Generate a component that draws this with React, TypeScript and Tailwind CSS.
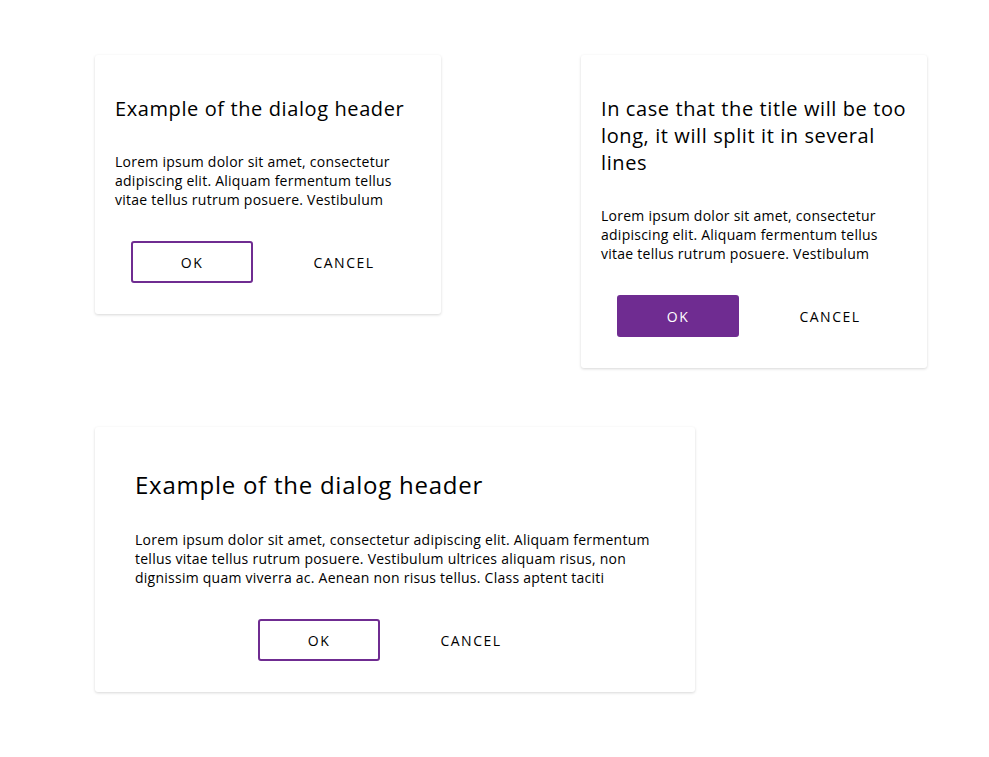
import React from 'react';

const lorem =
  'Lorem ipsum dolor sit amet, consectetur adipiscing elit. Aliquam fermentum tellus vitae tellus rutrum posuere. Vestibulum';
const loremLong =
  'Lorem ipsum dolor sit amet, consectetur adipiscing elit. Aliquam fermentum tellus vitae tellus rutrum posuere. Vestibulum ultrices aliquam risus, non dignissim quam viverra ac. Aenean non risus tellus. Class aptent taciti';

function Dialog({
  title,
  body,
  filled,
  large,
}: {
  title: string;
  body: string;
  filled?: boolean;
  large?: boolean;
}) {
  return (
    <div
      className={
        'bg-white rounded-[3px] shadow-[0_1px_3px_rgba(0,0,0,0.16)] ' +
        (large ? 'w-[600px] px-10 pt-[42px] pb-[31px]' : 'w-[346px] px-5 pt-10 pb-[31px]')
      }
    >
      <h2
        className={
          'text-black ' +
          (large
            ? 'text-[24px] leading-[32px] tracking-[0.75px]'
            : 'text-[20px] leading-[27px] tracking-[0.6px]')
        }
      >
        {title}
      </h2>
      <p
        className={
          'text-[14px] leading-[19px] text-black tracking-[0.25px] ' +
          (large ? 'mt-[29px]' : 'mt-[30px]')
        }
      >
        {body}
      </p>
      <div className="flex justify-center gap-[30px] mt-8">
        <button
          className={
            'w-[122px] h-[42px] rounded-[3px] text-[14px] tracking-[1.5px] border-2 border-[#6f2c91] ' +
            (filled ? 'bg-[#6f2c91] text-white' : 'bg-white text-black')
          }
        >
          OK
        </button>
        <button className="w-[122px] h-[42px] text-[14px] tracking-[1.5px] text-black">
          CANCEL
        </button>
      </div>
    </div>
  );
}

export default function App() {
  return (
    <div
      className="min-h-screen bg-white pl-[95px] pt-[55px]"
      style={{ fontFamily: '"Open Sans", sans-serif' }}
    >
      <div className="flex items-start gap-[140px]">
        <Dialog title="Example of the dialog header" body={lorem} />
        <Dialog
          title="In case that the title will be too long, it will split it in several lines"
          body={lorem}
          filled
        />
      </div>
      <div className="mt-[59px]">
        <Dialog title="Example of the dialog header" body={loremLong} large />
      </div>
    </div>
  );
}
